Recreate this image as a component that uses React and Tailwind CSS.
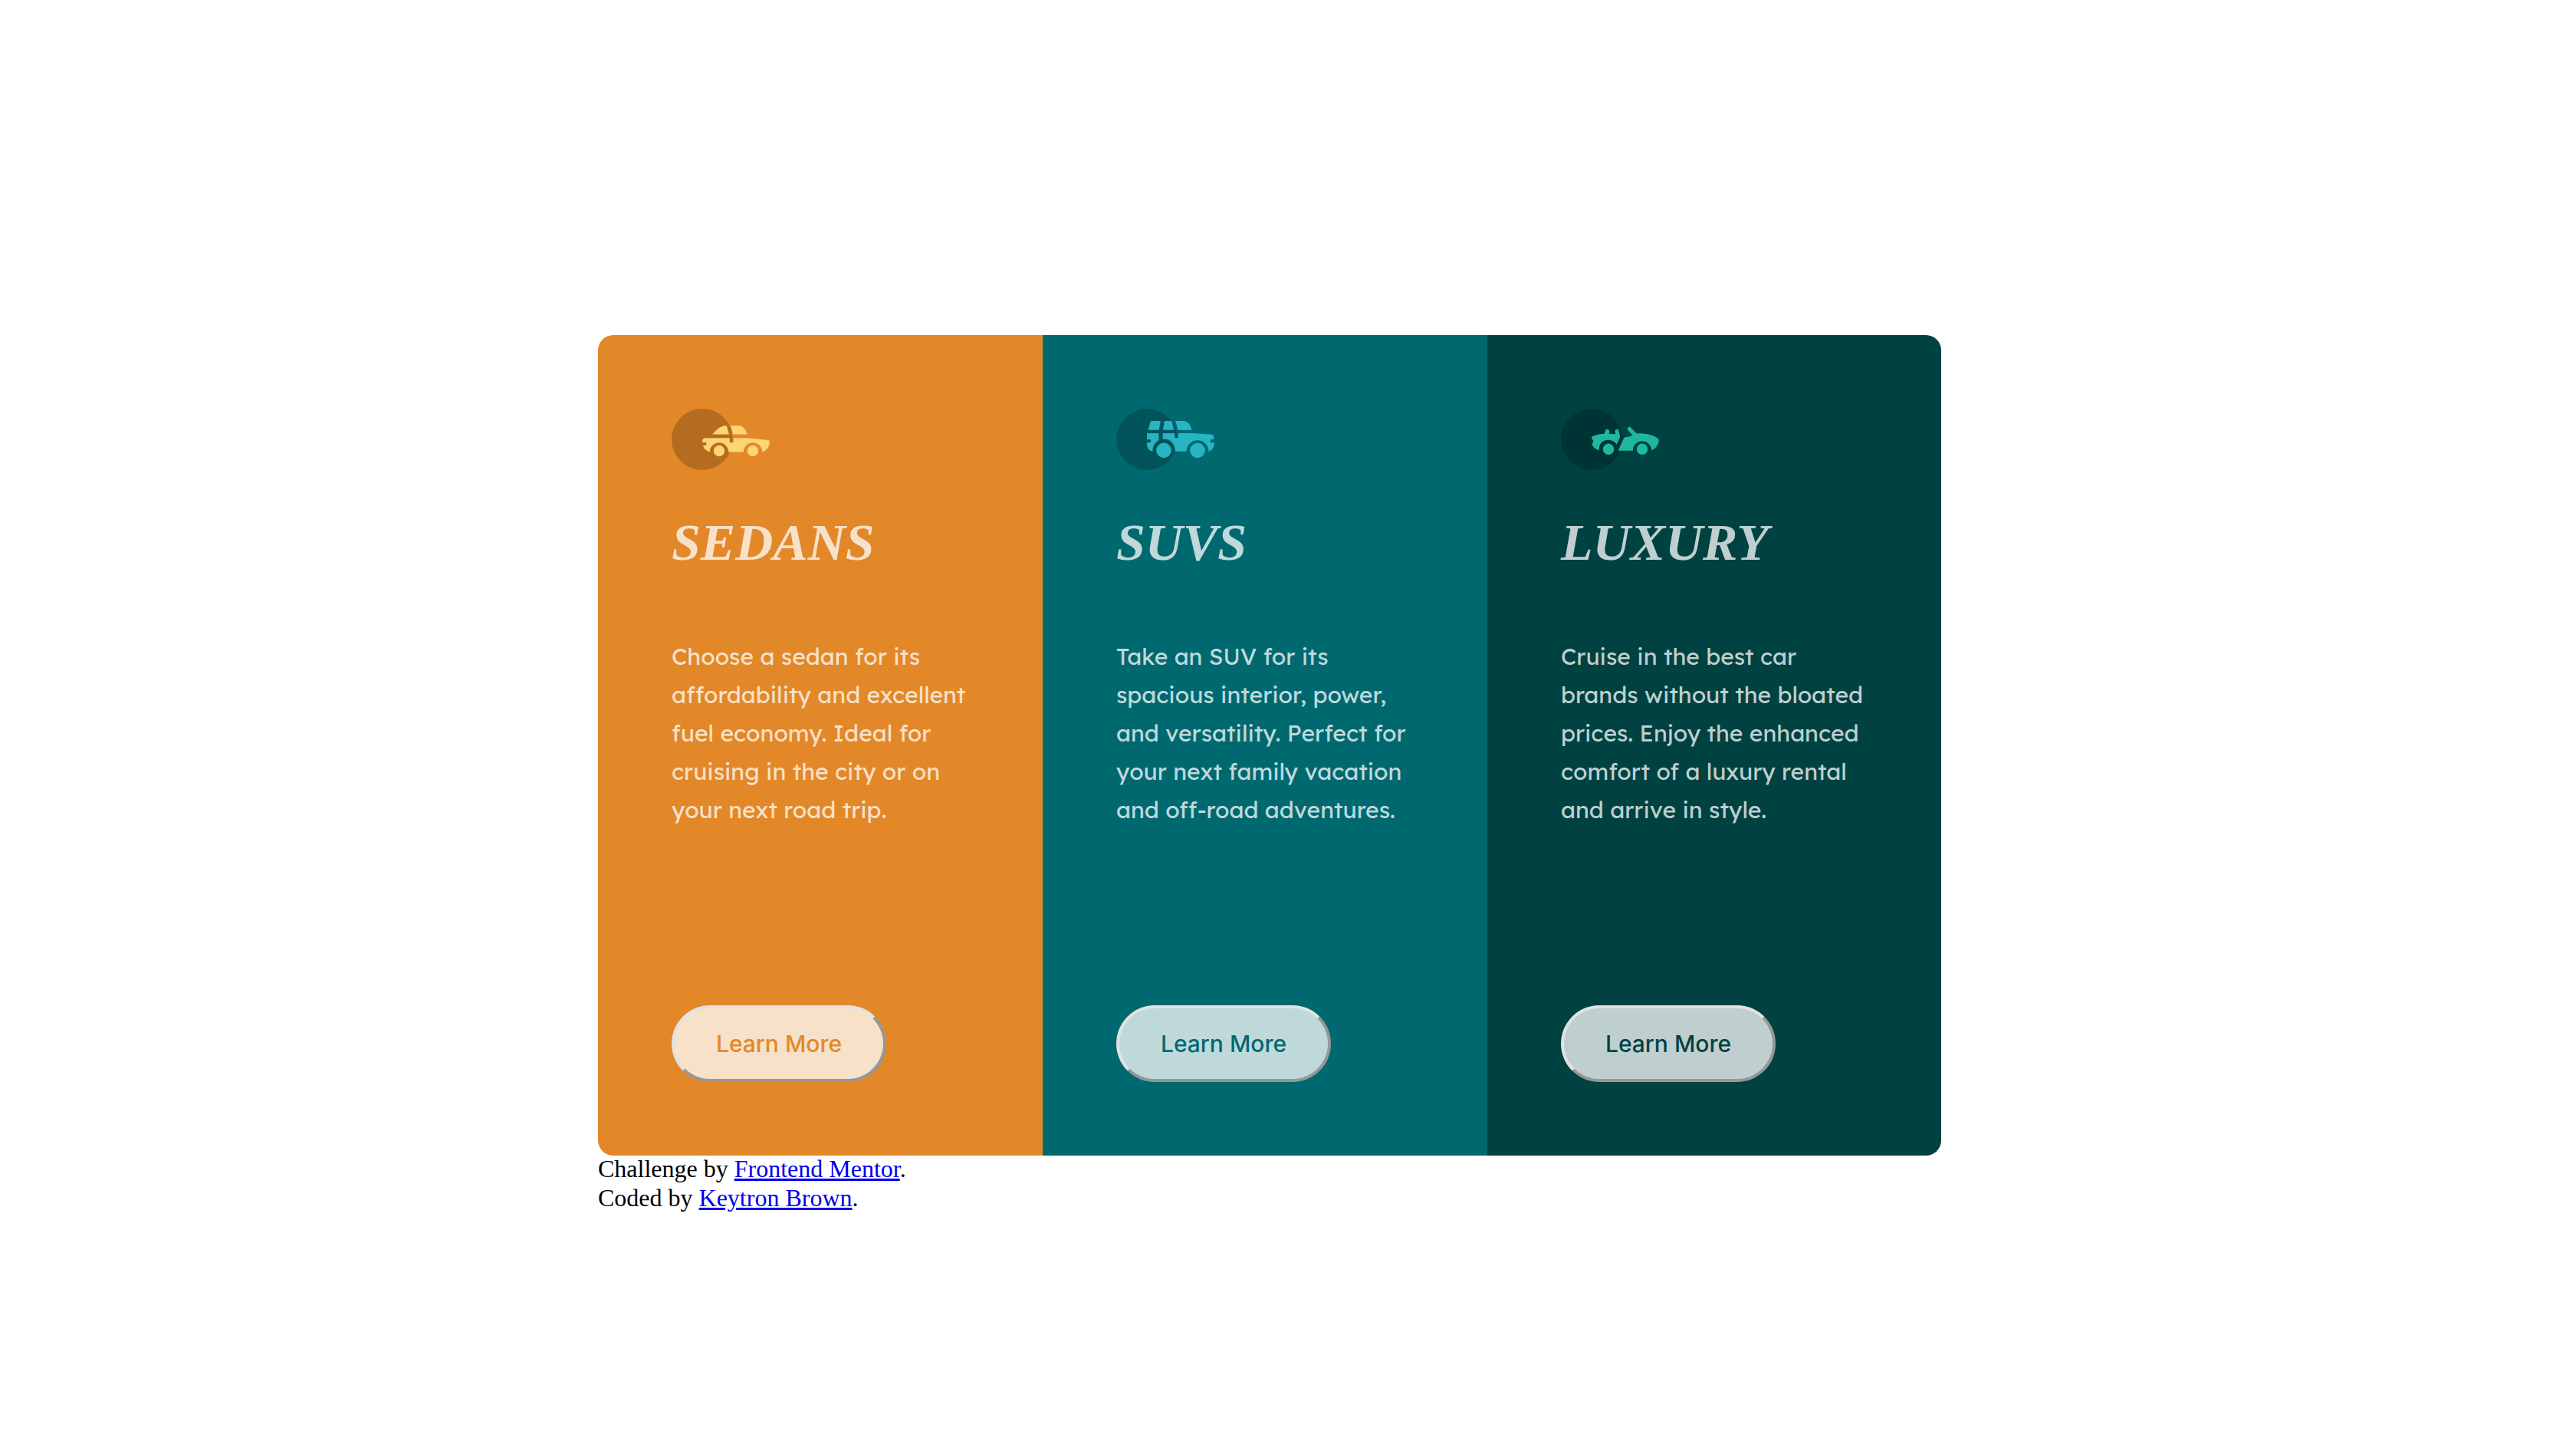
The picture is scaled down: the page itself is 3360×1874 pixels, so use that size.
function SedanIcon() {
  return (
    <svg viewBox="0 0 64 40" className="h-20 w-32" aria-hidden="true">
      <circle cx="20" cy="20" r="20" fill="#000" fillOpacity=".2" />
      <g fill="#FFD473">
        <path d="M26.5 16.8C29 14.4 31 11 35.8 11L37.5 16.8Z" />
        <path d="M38.5 11H43.5C46.6 11 48.4 13.4 49.2 16.8H39.9C39.7 14.6 39.2 12.6 38.5 11Z" />
        <path d="M21.9 19.1H37.8V20.9A1.3 1.3 0 0 0 40.4 20.9V19.1H49.5L63 20.5C63.7 20.6 64 21.2 63.9 22C63.6 25.2 62 27.6 59.1 28.1A6.1 6.1 0 1 0 46.9 28.3H37.1A6.1 6.1 0 1 0 24.9 28.2C22.6 27.5 21 26.2 20.4 24H21.7A1.05 1.05 0 0 0 21.7 21.9H20V21C20 20 20.8 19.1 21.9 19.1Z" />
        <circle cx="31" cy="27.5" r="3.6" />
        <circle cx="53" cy="27.5" r="3.6" />
      </g>
    </svg>
  );
}

function SuvIcon() {
  return (
    <svg viewBox="0 0 64 40" className="h-20 w-32" aria-hidden="true">
      <circle cx="20" cy="20" r="20" fill="#000" fillOpacity=".2" />
      <g fill="#28B5C3">
        <path d="M23.2 8H28.9L27.9 13.9H20.8L22.2 8.8Q22.4 8 23.2 8Z" />
        <path d="M31.4 8H36.1L37.7 13.9H30.5Z" />
        <path d="M38.5 8H43.2C46.6 8 48.4 10.2 49.2 13.9H40C39.7 11.6 39.2 9.6 38.5 8Z" />
        <path d="M20 16H27.7V20.6C25 22 23.5 24.7 23.8 27.9C21.5 27.5 20 25.6 20 23.4V22.1H21.6A1.05 1.05 0 0 0 21.6 20H20Z" />
        <path d="M30.3 16H38.1V18.1A1.2 1.2 0 0 0 40.5 18.1V16H49.5L62.4 16.9C63.1 17 63.5 17.6 63.5 18.3V20H62.2A1.05 1.05 0 0 0 62.2 22.1H63.9C63.9 25 62.6 27.2 60.3 27.9A7.3 7.3 0 1 0 45.7 27.9H38.4C38.6 23.2 35.2 19.4 30.3 19.8Z" />
        <circle cx="31" cy="27.2" r="4.9" />
        <circle cx="53" cy="27.2" r="4.9" />
      </g>
    </svg>
  );
}

function LuxuryIcon() {
  return (
    <svg viewBox="0 0 64 40" className="h-20 w-32" aria-hidden="true">
      <circle cx="20" cy="20" r="20" fill="#000" fillOpacity=".2" />
      <g fill="#1DB89F">
        <path d="M20.8 17.9C23.2 17 25.8 16.5 28.4 16.3L29 14.4C29.5 12.9 31.7 13.1 31.6 14.8L31.3 16.4L35.6 16.6L35.3 15C35 13.2 37.1 12.7 37.7 14.3L38.5 17.6Q38.6 18.4 38.2 19.2L36.4 23.3C33.2 18.4 24.2 19.6 24.9 27.1C22.4 26.4 20.8 25.2 20.4 23.3C20.4 22.4 21 22 21.3 21.3L20.1 19.3C19.8 18.7 20 18.1 20.8 17.9Z" />
        <path d="M37.3 27.4L41.1 19.1Q41.4 18.5 42 18.6C43.6 18.6 45.2 17.8 46.7 17.2L43.7 14C42.7 12.6 44.4 11.1 45.6 12.4L49.3 16.1C55.6 15.9 60.4 17 63.3 19.5C64 20.1 64 21 63.7 21.8C62.9 24.4 61.5 26.3 59.1 27.1A6.1 6.1 0 1 0 46.9 27.4Z" />
        <circle cx="31" cy="26.4" r="3.6" />
        <circle cx="53" cy="26.4" r="3.6" />
      </g>
    </svg>
  );
}

const cards = [
  {
    title: "SEDANS",
    Icon: SedanIcon,
    background: "bg-[#e28828]",
    label: "text-[#e28828]",
    text: "Choose a sedan for its affordability and excellent fuel economy. Ideal for cruising in the city or on your next road trip.",
  },
  {
    title: "SUVS",
    Icon: SuvIcon,
    background: "bg-[#006970]",
    label: "text-[#006970]",
    text: "Take an SUV for its spacious interior, power, and versatility. Perfect for your next family vacation and off-road adventures.",
  },
  {
    title: "LUXURY",
    Icon: LuxuryIcon,
    background: "bg-[#004241]",
    label: "text-[#004241]",
    text: "Cruise in the best car brands without the bloated prices. Enjoy the enhanced comfort of a luxury rental and arrive in style.",
  },
];

function Card({ title, Icon, background, label, text }) {
  return (
    <section className={`flex flex-col items-start p-24 ${background}`}>
      <Icon />
      <h2 className="mt-[46px] font-['Apple_Chancery','Z003','URW_Chancery_L','Liberation_Serif',serif] text-[68px] leading-[96px] font-bold italic text-white/75">
        {title}
      </h2>
      <p className="mt-[76px] mb-[230px] font-['Lexend_Deca','Inter',sans-serif] text-[30px] leading-[50px] font-normal text-white/75">
        {text}
      </p>
      <button
        type="button"
        className={`mt-auto h-[100px] w-[280px] rounded-full border-4 border-t-[#e2e2e2] border-r-[#979797] border-b-[#979797] border-l-[#e2e2e2] bg-white/75 font-['Inter',sans-serif] text-[30px] font-medium ${label}`}
      >
        Learn More
      </button>
    </section>
  );
}

export default function App() {
  return (
    <div className="min-h-screen bg-white pt-[437px]">
      <div className="mx-auto max-w-[1800px]">
        <main className="grid w-[1752px] max-w-full grid-cols-[580fr_580fr_592fr] overflow-hidden rounded-[20px]">
          {cards.map((card) => (
            <Card key={card.title} {...card} />
          ))}
        </main>
        <footer className="-mt-0.5 font-['Liberation_Serif',serif] text-[32px] leading-[38px] text-black">
          <p>
            Challenge by{" "}
            <a href="#frontend-mentor" className="text-[#0000ee] underline">
              Frontend Mentor
            </a>
            .
          </p>
          <p>
            Coded by{" "}
            <a href="#keytron-brown" className="text-[#0000ee] underline">
              Keytron Brown
            </a>
            .
          </p>
        </footer>
      </div>
    </div>
  );
}
